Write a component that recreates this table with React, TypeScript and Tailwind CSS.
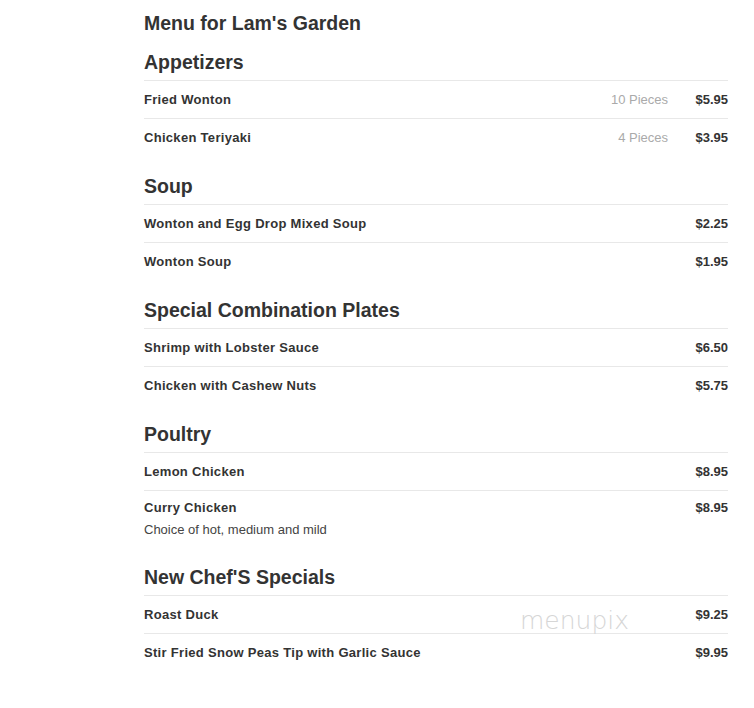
import React from "react";

type Item = { name: string; price: string; note?: string; desc?: string };
type Section = { title: string; items: Item[] };

const sections: Section[] = [
  {
    title: "Appetizers",
    items: [
      { name: "Fried Wonton", note: "10 Pieces", price: "$5.95" },
      { name: "Chicken Teriyaki", note: "4 Pieces", price: "$3.95" },
    ],
  },
  {
    title: "Soup",
    items: [
      { name: "Wonton and Egg Drop Mixed Soup", price: "$2.25" },
      { name: "Wonton Soup", price: "$1.95" },
    ],
  },
  {
    title: "Special Combination Plates",
    items: [
      { name: "Shrimp with Lobster Sauce", price: "$6.50" },
      { name: "Chicken with Cashew Nuts", price: "$5.75" },
    ],
  },
  {
    title: "Poultry",
    items: [
      { name: "Lemon Chicken", price: "$8.95" },
      { name: "Curry Chicken", price: "$8.95", desc: "Choice of hot, medium and mild" },
    ],
  },
  {
    title: "New Chef'S Specials",
    items: [
      { name: "Roast Duck", price: "$9.25" },
      { name: "Stir Fried Snow Peas Tip with Garlic Sauce", price: "$9.95" },
    ],
  },
];

function MenuRow({ item }: { item: Item }) {
  if (item.desc) {
    return (
      <div className="border-t border-[#e8e8e8] pt-[9px] pb-[9px]">
        <div className="flex items-center h-[16px]">
          <span className="flex-1 text-[13px] tracking-[0.3px] font-bold text-[#333]">{item.name}</span>
          <span className="w-[60px] text-right text-[13px] font-bold text-[#333]">{item.price}</span>
        </div>
        <div className="mt-[6px] text-[13px] leading-[16px] text-[#444]">{item.desc}</div>
      </div>
    );
  }
  return (
    <div className="flex items-center h-[38px] border-t border-[#e8e8e8]">
      <span className="flex-1 text-[13px] tracking-[0.3px] font-bold text-[#333]">{item.name}</span>
      {item.note && <span className="text-[13px] text-[#aaa]">{item.note}</span>}
      <span className="w-[60px] text-right text-[13px] font-bold text-[#333]">{item.price}</span>
    </div>
  );
}

export default function App() {
  return (
    <div className="relative min-h-[708px] w-[754px] bg-white font-['Liberation_Sans',Arial,sans-serif]">
      <div className="ml-[144px] w-[584px] pt-[11px]">
        <h1 className="text-[19.5px] leading-[24px] font-bold text-[#333]">Menu for Lam's Garden</h1>
        {sections.map((s, i) => (
          <div key={s.title} className={i === 0 ? "mt-[15px]" : "mt-[18px]"}>
            <h2 className="text-[19.5px] leading-[24px] font-bold text-[#333] mb-[6px]">{s.title}</h2>
            {s.items.map((it) => (
              <MenuRow key={it.name} item={it} />
            ))}
          </div>
        ))}
      </div>
      {/* watermark */}
      <div className="absolute left-[520px] top-[606px] text-[25px] leading-[30px] font-extralight text-[#d6d6d6] font-['DejaVu_Sans',sans-serif] pointer-events-none">
        menupix
      </div>
    </div>
  );
}
